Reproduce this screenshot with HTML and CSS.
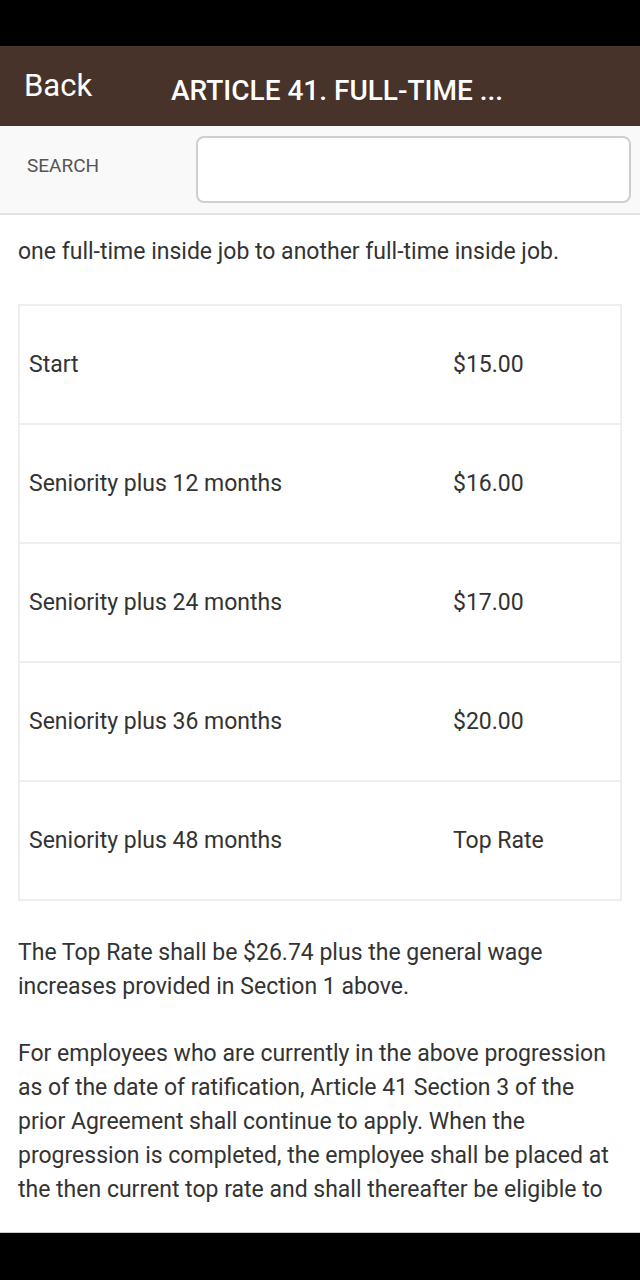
FILE: index.html
```html
<!DOCTYPE html>
<html>
<head>
<meta charset="utf-8">
<link rel="stylesheet" href="styles.css">
</head>
<body>
<div class="screen">
  <div class="statusbar"></div>
  <header class="topbar">
    <span class="back">Back</span>
    <span class="title">ARTICLE 41. FULL-TIME ...</span>
  </header>
  <div class="searchbar">
    <span class="search-label">SEARCH</span>
    <input class="search-input" type="text">
  </div>
  <main class="content">
    <div class="scroller">
      <p class="para first">one full-time inside job to another full-time inside job.</p>
      <table class="rates">
        <tr><td class="c1">Start</td><td class="c2">$15.00</td></tr>
        <tr><td class="c1">Seniority plus 12 months</td><td class="c2">$16.00</td></tr>
        <tr><td class="c1">Seniority plus 24 months</td><td class="c2">$17.00</td></tr>
        <tr><td class="c1">Seniority plus 36 months</td><td class="c2">$20.00</td></tr>
        <tr><td class="c1">Seniority plus 48 months</td><td class="c2">Top Rate</td></tr>
      </table>
      <p class="para">The Top Rate shall be $26.74 plus the general wage increases provided in Section 1 above.</p>
      <p class="para">For employees who are currently in the above progression as of the date of ratification, Article 41 Section 3 of the prior Agreement shall continue to apply. When the progression is completed, the employee shall be placed at the then current top rate and shall thereafter be eligible to receive the general wage increases provided in Section 1 above.</p>
    </div>
  </main>
  <div class="bottomgap"></div>
  <div class="navbar"></div>
</div>
</body>
</html>
```

FILE: styles.css
```css
* { box-sizing: border-box; }
html, body { margin: 0; padding: 0; background: #000; }
.screen {
  width: 640px;
  height: 1280px;
  display: flex;
  flex-direction: column;
  font-family: Roboto, "Liberation Sans", sans-serif;
  background: #fff;
  overflow: hidden;
}
.statusbar { height: 46px; background: #000; flex: none; }
.topbar {
  height: 80px;
  flex: none;
  background: #48332a;
  color: #fff;
  display: flex;
  align-items: center;
  padding-left: 24px;
}
.back {
  font-size: 31px;
  font-weight: 400;
  width: 147px;
  margin-top: -2px;
}
.title {
  font-size: 28px;
  font-weight: 500;
  margin-top: 8px;
}
.searchbar {
  height: 89px;
  flex: none;
  background: #f9f9f9;
  border-bottom: 2px solid #e2e2e2;
  display: flex;
  align-items: center;
  padding: 0 9px 0 27px;
}
.search-label {
  font-size: 19px;
  color: #555;
  width: 169px;
  margin-top: -8px;
}
.search-input {
  flex: 1;
  height: 67px;
  border: 2px solid #cfcfcf;
  border-radius: 8px;
  background: #fff;
  outline: none;
}
.content {
  height: 998px;
  flex: none;
  overflow: hidden;
  background: #fff;
}
.scroller {
  padding: 20px 18px 0 18px;
}
.para {
  margin: 0 0 33px 0;
  font-size: 23px;
  line-height: 34px;
  color: #333;
}
.para.first { margin-bottom: 35px; }
.rates {
  width: 604px;
  border-collapse: collapse;
  border: 2px solid #eeeeee;
  margin-bottom: 35px;
}
.rates td {
  height: 119px;
  padding: 0 9px;
  font-size: 23px;
  color: #333;
  border-top: 2px solid #eeeeee;
  vertical-align: middle;
}
.rates .c1 { width: 425px; }
.bottomgap {
  height: 20px;
  flex: none;
  background: #fff;
  border-bottom: 1px solid #cccccc;
}
.navbar { flex: 1; background: #000; }
```
